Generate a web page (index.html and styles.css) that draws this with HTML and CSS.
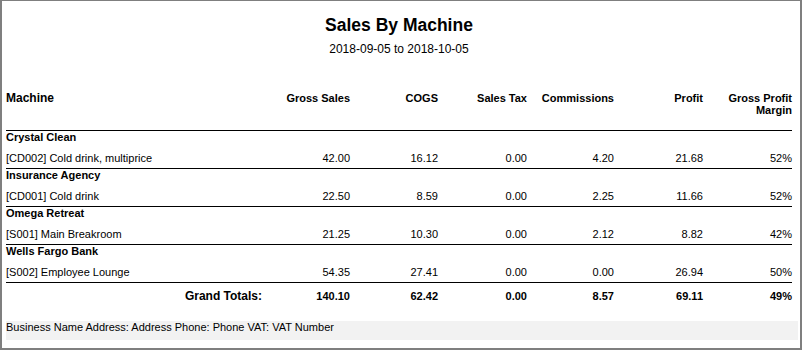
FILE: index.html
```html
<!DOCTYPE html>
<html>
<head>
<meta charset="utf-8">
<link rel="stylesheet" href="styles.css">
</head>
<body>
<div class="frame">
  <div class="report">
    <h1 class="title">Sales By Machine</h1>
    <div class="range">2018-09-05 to 2018-10-05</div>
    <table class="grid">
      <colgroup>
        <col class="c-machine">
        <col class="c-88">
        <col class="c-88">
        <col class="c-89">
        <col class="c-87">
        <col class="c-89">
        <col class="c-89">
      </colgroup>
      <thead>
        <tr class="head">
          <th class="name-head">Machine</th>
          <th>Gross Sales</th>
          <th>COGS</th>
          <th>Sales Tax</th>
          <th>Commissions</th>
          <th>Profit</th>
          <th>Gross Profit Margin</th>
        </tr>
      </thead>
      <tbody>
        <tr class="group"><td colspan="7">Crystal Clean</td></tr>
        <tr class="item"><td class="name">[CD002] Cold drink, multiprice</td><td>42.00</td><td>16.12</td><td>0.00</td><td>4.20</td><td>21.68</td><td>52%</td></tr>
        <tr class="group"><td colspan="7">Insurance Agency</td></tr>
        <tr class="item"><td class="name">[CD001] Cold drink</td><td>22.50</td><td>8.59</td><td>0.00</td><td>2.25</td><td>11.66</td><td>52%</td></tr>
        <tr class="group"><td colspan="7">Omega Retreat</td></tr>
        <tr class="item"><td class="name">[S001] Main Breakroom</td><td>21.25</td><td>10.30</td><td>0.00</td><td>2.12</td><td>8.82</td><td>42%</td></tr>
        <tr class="group"><td colspan="7">Wells Fargo Bank</td></tr>
        <tr class="item"><td class="name">[S002] Employee Lounge</td><td>54.35</td><td>27.41</td><td>0.00</td><td>0.00</td><td>26.94</td><td>50%</td></tr>
        <tr class="totals"><td class="total-label">Grand Totals:</td><td>140.10</td><td>62.42</td><td>0.00</td><td>8.57</td><td>69.11</td><td>49%</td></tr>
      </tbody>
    </table>
  </div>
  <div class="footer">Business Name Address: Address Phone: Phone VAT: VAT Number</div>
</div>
</body>
</html>
```

FILE: styles.css
```css
html, body {
  margin: 0;
  padding: 0;
  background: #ffffff;
}
body {
  font-family: "Liberation Sans", Arial, sans-serif;
  color: #000;
}
.frame {
  box-sizing: border-box;
  width: 802px;
  height: 350px;
  border-style: solid;
  border-color: #7f7f7f;
  border-width: 1px 2px 2px 2px;
  padding: 0 2px 0 4px;
  display: flex;
  flex-direction: column;
}
.report {
  width: 786px;
  padding-top: 14px;
}
.title {
  margin: 0;
  font-size: 17.5px;
  line-height: 20px;
  font-weight: bold;
  text-align: center;
}
.range {
  margin-top: 7px;
  font-size: 12px;
  line-height: 14px;
  text-align: center;
}
.grid {
  margin-top: 36px;
  width: 786px;
  table-layout: fixed;
  border-collapse: collapse;
  border-spacing: 0;
  font-size: 11px;
}
.c-machine { width: 256px; }
.c-88 { width: 88px; }
.c-89 { width: 89px; }
.c-87 { width: 87px; }
.grid th,
.grid td {
  padding: 0;
  text-align: right;
  white-space: nowrap;
}
.head th {
  vertical-align: top;
  font-weight: bold;
  font-size: 11px;
  line-height: 12px;
  padding-bottom: 14px;
  border-bottom: 1px solid #000;
  white-space: normal;
}
.head th.name-head {
  text-align: left;
  font-size: 12px;
}
.group td {
  text-align: left;
  font-weight: bold;
  line-height: 13px;
  padding-bottom: 3px;
}
.item td {
  line-height: 13px;
  padding: 5px 0 3px;
  border-bottom: 1px solid #000;
}
.item td.name {
  text-align: left;
}
.totals td {
  font-weight: bold;
  line-height: 13px;
  padding-top: 7px;
}
.totals td.total-label {
  font-size: 12px;
}
.footer {
  margin-top: 18px;
  background: #f2f2f2;
  font-size: 11px;
  line-height: 13px;
  padding-bottom: 6px;
}
```
